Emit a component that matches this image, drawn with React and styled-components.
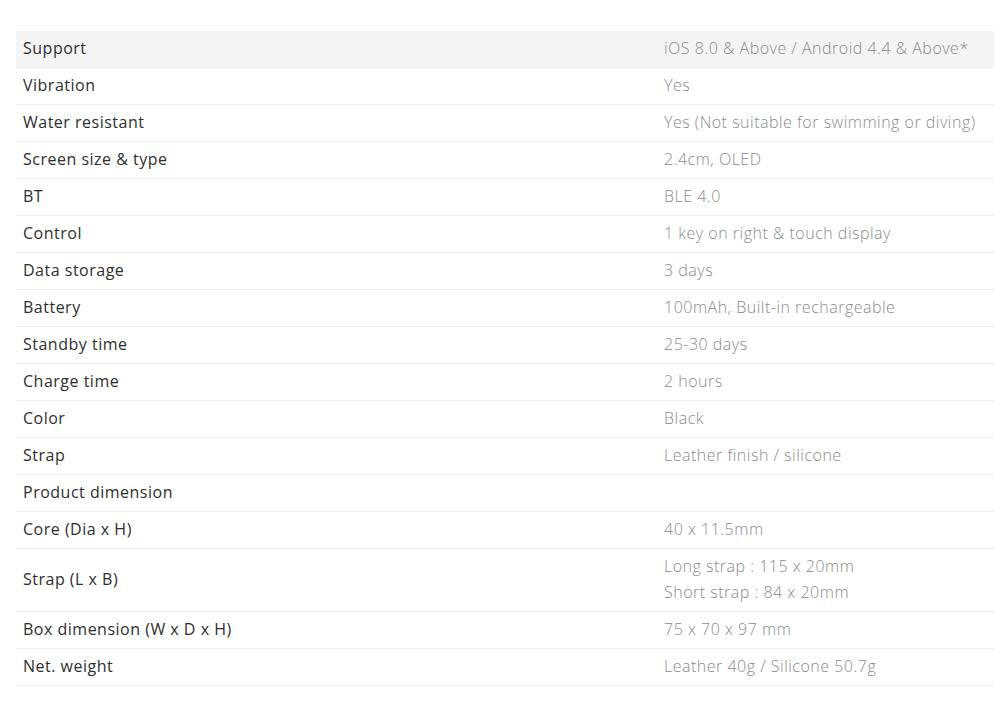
import React from 'react'
import styled, { createGlobalStyle } from 'styled-components'

const specs = [
	['Support', 'iOS 8.0 & Above / Android 4.4 & Above*'],
	['Vibration', 'Yes'],
	['Water resistant', 'Yes (Not suitable for swimming or diving)'],
	['Screen size & type', '2.4cm, OLED'],
	['BT', 'BLE 4.0'],
	['Control', '1 key on right & touch display'],
	['Data storage', '3 days'],
	['Battery', '100mAh, Built-in rechargeable'],
	['Standby time', '25-30 days'],
	['Charge time', '2 hours'],
	['Color', 'Black'],
	['Strap', 'Leather finish / silicone'],
	['Product dimension', ''],
	['Core (Dia x H)', '40 x 11.5mm'],
	['Strap (L x B)', ['Long strap : 115 x 20mm', 'Short strap : 84 x 20mm']],
	['Box dimension (W x D x H)', '75 x 70 x 97 mm'],
	['Net. weight', 'Leather 40g / Silicone 50.7g'],
]

const App = () => {
	return (
		<>
			<GlobalStyle />
			<Wrapper>
				<SpecTable>
					<colgroup>
						<LabelCol />
						<col />
					</colgroup>
					<tbody>
						{specs.map(([label, value], i) => (
							<Row key={label + i} $first={i === 0}>
								<Label>{label}</Label>
								<Value>
									{Array.isArray(value)
										? value.map((line, j) => (
												<React.Fragment key={j}>
													{line}
													{j < value.length - 1 && <br />}
												</React.Fragment>
										  ))
										: value}
								</Value>
							</Row>
						))}
					</tbody>
				</SpecTable>
			</Wrapper>
		</>
	)
}

export default App

const GlobalStyle = createGlobalStyle`
	body {
		margin: 0;
		background: #fff;
		font-family: "Open Sans", "Liberation Sans", sans-serif;
	}
`

const Wrapper = styled.div`
	padding: 31px 1px 20px 16px;
`

const SpecTable = styled.table`
	width: 100%;
	table-layout: fixed;
	border-collapse: collapse;
	font-size: 16px;
	line-height: 26px;
	letter-spacing: 0.5px;
`

const LabelCol = styled.col`
	width: 642px;
`

const Row = styled.tr`
	background: ${(p) => (p.$first ? '#f4f4f4' : 'transparent')};
	border-bottom: 1px solid #efefef;
`

const Label = styled.td`
	padding: 4px 7px 6px;
	color: #2e2e2e;
	font-weight: 500;
	vertical-align: middle;
`

const Value = styled.td`
	padding: 4px 6px 6px;
	color: #8a8a8a;
	font-weight: 300;
	vertical-align: middle;
`
